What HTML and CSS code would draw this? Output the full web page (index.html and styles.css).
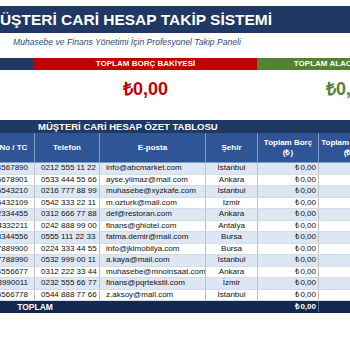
FILE: index.html
```html
<!DOCTYPE html>
<html>
<head>
    <title>Müşteri Cari Hesap Takip Sistemi</title>
    <meta charset="UTF-8">
    <meta name="viewport" content="width=device-width, initial-scale=1.0">
    <link rel="stylesheet" href="styles.css">
</head>
<body>

<div class="sheet">
    <div class="title">MÜŞTERİ CARİ HESAP TAKİP SİSTEMİ</div>
    <div class="subtitle">Muhasebe ve Finans Yönetimi İçin Profesyonel Takip Paneli</div>

    <!-- Summary cards -->
    <div class="kpis">
        <div class="kpi navy">
            <div class="kpi-label">TOPLAM MÜŞTERİ</div>
            <div class="kpi-value">12</div>
        </div>
        <div class="kpi red">
            <div class="kpi-label">TOPLAM BORÇ BAKİYESİ</div>
            <div class="kpi-value">₺0,00</div>
        </div>
        <div class="kpi green">
            <div class="kpi-label">TOPLAM ALACAK BAKİYESİ</div>
            <div class="kpi-value">₺0,00</div>
        </div>
    </div>

    <table class="summary">
        <caption>MÜŞTERİ CARİ HESAP ÖZET TABLOSU</caption>
        <colgroup>
            <col class="c-code">
            <col class="c-name">
            <col class="c-tax">
            <col class="c-phone">
            <col class="c-mail">
            <col class="c-city">
            <col class="c-money">
            <col class="c-money">
            <col class="c-money">
        </colgroup>
        <thead>
            <tr>
                <th>Kod</th>
                <th>Müşteri Adı</th>
                <th>Vergi No / TC</th>
                <th>Telefon</th>
                <th>E-posta</th>
                <th>Şehir</th>
                <th>Toplam Borç<br>(₺)</th>
                <th>Toplam Alacak<br>(₺)</th>
                <th>Bakiye<br>(₺)</th>
            </tr>
        </thead>
        <tbody id="rows"></tbody>
        <tfoot>
            <tr class="total">
                <td colspan="2"></td>
                <td colspan="2" class="total-label">TOPLAM</td>
                <td></td>
                <td></td>
                <td class="num sep">₺0,00</td>
                <td class="num">₺0,00</td>
                <td class="num">₺0,00</td>
            </tr>
        </tfoot>
    </table>
</div>

<script>
    const customers = [
        ['C001', 'ABC Market', '1234567890', '0212 555 11 22', 'info@abcmarket.com', 'İstanbul'],
        ['C002', 'Ayşe Yılmaz', '12345678901', '0533 444 55 66', 'ayse.yilmaz@mail.com', 'Ankara'],
        ['C003', 'XYZ Kafe', '9876543210', '0216 777 88 99', 'muhasebe@xyzkafe.com', 'İstanbul'],
        ['C004', 'Mehmet Öztürk', '98765432109', '0542 333 22 11', 'm.ozturk@mail.com', 'İzmir'],
        ['C005', 'DEF Restoran', '1122334455', '0312 666 77 88', 'def@restoran.com', 'Ankara'],
        ['C006', 'GHI Otel', '5544332211', '0242 888 99 00', 'finans@ghiotel.com', 'Antalya'],
        ['C007', 'Fatma Demir', '11223344556', '0555 111 22 33', 'fatma.demir@mail.com', 'Bursa'],
        ['C008', 'JKL Mobilya', '6677889900', '0224 333 44 55', 'info@jklmobilya.com', 'Bursa'],
        ['C009', 'Ali Kaya', '55667788990', '0532 999 00 11', 'a.kaya@mail.com', 'İstanbul'],
        ['C010', 'MNO İnşaat', '3344556677', '0312 222 33 44', 'muhasebe@mnoinsaat.com', 'Ankara'],
        ['C011', 'PQR Tekstil', '7788990011', '0232 555 66 77', 'finans@pqrtekstil.com', 'İzmir'],
        ['C012', 'Zeynep Aksoy', '33445566778', '0544 888 77 66', 'z.aksoy@mail.com', 'İstanbul']
    ];

    let html = '';
    customers.forEach((c) => {
        html += '<tr class="row">';
        html += '<td>' + c[0] + '</td>';
        html += '<td>' + c[1] + '</td>';
        html += '<td class="num tax">' + c[2] + '</td>';
        html += '<td>' + c[3] + '</td>';
        html += '<td>' + c[4] + '</td>';
        html += '<td class="center">' + c[5] + '</td>';
        html += '<td class="num">₺0,00</td>';
        html += '<td class="num">₺0,00</td>';
        html += '<td class="num">₺0,00</td>';
        html += '</tr>';
    });
    document.getElementById('rows').innerHTML = html;
</script>

</body>
</html>
```

FILE: styles.css
```css
/* Global styles */
body {
    margin: 0;
    padding: 0;
    overflow: hidden;
    background-color: #ffffff;
    color: #000000;
    font-family: "Liberation Sans", Arial, sans-serif;
}

/* The sheet is wider than the window, scrolled a bit to the right */
.sheet {
    width: 586px;
    margin-left: -146px;
    padding-top: 6px;
}

.title {
    background-color: #1f3864;
    color: #ffffff;
    height: 27px;
    line-height: 27px;
    font-size: 15.5px;
    font-weight: bold;
    padding-left: 133px;
    white-space: nowrap;
}

.subtitle {
    color: #2e4a7d;
    font-style: italic;
    font-size: 8.6px;
    line-height: 18px;
    padding-left: 159px;
    margin-bottom: 7px;
    white-space: nowrap;
}

/* Summary cards */
.kpis {
    display: grid;
    grid-template-columns: 180px 223px 183px;
}

.kpi-label {
    height: 12px;
    line-height: 12px;
    font-size: 8px;
    font-weight: bold;
    color: #ffffff;
    text-align: center;
    white-space: nowrap;
}

.kpi-value {
    height: 40px;
    line-height: 39px;
    font-size: 18px;
    font-weight: bold;
    text-align: center;
}

.navy .kpi-label { background-color: #1f3864; }
.navy .kpi-value { color: #1f3864; }
.red .kpi-label { background-color: #c00000; }
.red .kpi-value { color: #c00000; }
.green .kpi-label { background-color: #548235; }
.green .kpi-value { color: #548235; }

/* Summary table */
.summary {
    width: 586px;
    margin-top: 10px;
    border-collapse: collapse;
    table-layout: fixed;
}

.c-code { width: 40px; }
.c-name { width: 76px; }
.c-tax { width: 64px; }
.c-phone { width: 65px; }
.c-mail { width: 106px; }
.c-city { width: 52px; }
.c-money { width: 61px; }

.summary caption {
    background-color: #1f3864;
    color: #ffffff;
    height: 13px;
    line-height: 13px;
    font-size: 9.5px;
    font-weight: bold;
    text-align: left;
    padding-left: 184px;
    white-space: nowrap;
}

.summary th {
    background-color: #2f5597;
    color: #ffffff;
    height: 29px;
    padding: 0 2px;
    font-size: 8px;
    line-height: 10px;
    font-weight: bold;
    border: 1px solid #7f9ccf;
    border-top: none;
    white-space: nowrap;
    overflow: hidden;
}

.summary td {
    padding: 0 2px 0 6px;
    font-size: 8px;
    line-height: 10px;
    color: #111111;
    border-left: 1px solid #c0c0c0;
    border-right: 1px solid #c0c0c0;
    border-bottom: 1px solid #d6dce5;
    white-space: nowrap;
    overflow: hidden;
}

.summary tr.row {
    height: 11.5px;
}

.summary tr.row:nth-child(odd) td {
    background-color: #dde7f4;
}

.summary td.num {
    text-align: right;
    padding: 0 2px;
}

.summary td.tax {
    padding-right: 6px;
}

.summary td.center {
    text-align: center;
    padding: 0 2px;
}

.summary tr.total {
    height: 12px;
}

.summary tr.total td {
    background-color: #142850;
    color: #ffffff;
    font-weight: bold;
    border-color: #142850;
}

.summary td.total-label {
    font-size: 8.5px;
    text-align: center;
    padding: 0 2px;
}

.summary tr.total td.sep {
    border-left: 1px solid #4f6592;
    border-right: 1px solid #4f6592;
}
```
